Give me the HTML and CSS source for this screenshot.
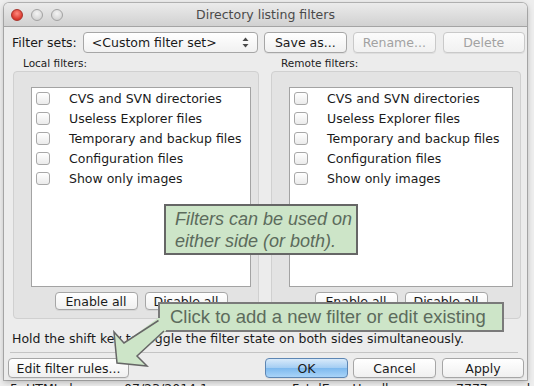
FILE: index.html
```html
<!DOCTYPE html>
<html lang="en">
<head>
    <meta charset="UTF-8">
    <title>Directory listing filters</title>
    <link rel="stylesheet" href="styles.css">
</head>
<body>
    <!-- Dialog window -->
    <div class="window">
        <div class="titlebar">
            <div class="lights">
                <span class="light close"></span>
                <span class="light"></span>
                <span class="light"></span>
            </div>
            <div class="title">Directory listing filters</div>
        </div>

        <div class="content">
            <!-- Filter sets row -->
            <div class="sets-row">
                <span class="sets-label">Filter sets:</span>
                <div class="select">
                    <span>&lt;Custom filter set&gt;</span>
                    <svg class="select-arrows" width="7" height="11" viewBox="0 0 7 11">
                        <path d="M3.5 0.5 L6.5 4 L0.5 4 Z" fill="#4a4a4a"/>
                        <path d="M3.5 10.5 L6.5 7 L0.5 7 Z" fill="#4a4a4a"/>
                    </svg>
                </div>
                <button class="btn">Save as...</button>
                <button class="btn" disabled>Rename...</button>
                <button class="btn" disabled>Delete</button>
            </div>

            <!-- Local / remote panels -->
            <div class="panels">
                <div class="panel panel-local">
                    <div class="panel-label">Local filters:</div>
                    <div class="group">
                        <ul class="list">
                            <li><span class="check"></span>CVS and SVN directories</li>
                            <li><span class="check"></span>Useless Explorer files</li>
                            <li><span class="check"></span>Temporary and backup files</li>
                            <li><span class="check"></span>Configuration files</li>
                            <li><span class="check"></span>Show only images</li>
                        </ul>
                        <div class="group-buttons">
                            <button class="btn small">Enable all</button>
                            <button class="btn small">Disable all</button>
                        </div>
                    </div>
                </div>
                <div class="panel panel-remote">
                    <div class="panel-label">Remote filters:</div>
                    <div class="group">
                        <ul class="list">
                            <li><span class="check"></span>CVS and SVN directories</li>
                            <li><span class="check"></span>Useless Explorer files</li>
                            <li><span class="check"></span>Temporary and backup files</li>
                            <li><span class="check"></span>Configuration files</li>
                            <li><span class="check"></span>Show only images</li>
                        </ul>
                        <div class="group-buttons">
                            <button class="btn small">Enable all</button>
                            <button class="btn small">Disable all</button>
                        </div>
                    </div>
                </div>
            </div>

            <p class="hint">Hold the shift key to toggle the filter state on both sides simultaneously.</p>
            <div class="sep"></div>

            <!-- Bottom buttons -->
            <div class="footer-row">
                <button class="btn edit">Edit filter rules...</button>
                <div class="spacer"></div>
                <button class="btn primary">OK</button>
                <button class="btn">Cancel</button>
                <button class="btn apply">Apply</button>
            </div>
        </div>

        <!-- Annotations -->
        <div class="callout callout-sides">Filters can be used on<br>either side (or both).</div>
        <div class="callout callout-edit">Click to add a new filter or edit existing</div>
        <svg class="arrow" width="534" height="386" viewBox="0 0 534 386">
            <polygon points="158,318 124,343 114,332 117,363 147,366 137,356 166,331 166,318" fill="#cde5c8"/>
            <path d="M158.5 320.5 L124 343 L114 332 L117 363 L147 366 L137 356 L164 331" fill="none" stroke="#666" stroke-width="1.5" stroke-linejoin="miter"/>
        </svg>
    </div>

    <!-- Application behind the dialog -->
    <div class="desk-row">
        <span class="c1">5. HTML docu</span>
        <span class="c2">07/23/2014 1</span>
        <span class="c3">FatalErrorHandl</span>
        <span class="c4">7777 cop-pl</span>
    </div>
</body>
</html>
```

FILE: styles.css
```css
/* Basic reset */
* {
    margin: 0;
    padding: 0;
    box-sizing: border-box;
}

body {
    font-family: "DejaVu Sans", sans-serif;
    font-size: 12.5px;
    color: #1a1a1a;
    background-color: #eeeeee;
    overflow: hidden;
    height: 386px;
}

/* Window */
.window {
    position: relative;
    width: 523px;
    height: 377px;
    margin: 3px 0 0 4px;
    background-color: #ececec;
    border-radius: 5px 5px 0 0;
    box-shadow: 0 0 0 1px rgba(0, 0, 0, 0.22), 0 2px 6px rgba(0, 0, 0, 0.25);
}

.titlebar {
    position: relative;
    height: 24px;
    display: flex;
    align-items: center;
    justify-content: center;
    background: linear-gradient(#ebebeb, #d1d1d1);
    border-bottom: 1px solid #a4a4a4;
    border-radius: 5px 5px 0 0;
}

.lights {
    position: absolute;
    left: 7px;
    top: 6px;
    display: flex;
    gap: 8px;
}

.light {
    width: 12px;
    height: 12px;
    border-radius: 50%;
    background: radial-gradient(circle at 50% 35%, #f4f4f4, #c9c9c9);
    border: 1px solid #a3a3a3;
}

.light.close {
    background: radial-gradient(circle at 50% 35%, #ff8b7f, #d9362b 70%);
    border-color: #a8322a;
}

.title {
    color: #4a4a4a;
    font-size: 12.5px;
}

.content {
    padding: 0 3px 0 8px;
}

/* Buttons */
.btn {
    flex-shrink: 0;
    font-family: "DejaVu Sans", sans-serif;
    font-size: 12.5px;
    color: #1a1a1a;
    height: 21px;
    width: 83px;
    white-space: nowrap;
    background: linear-gradient(#ffffff, #f0f0f0);
    border: 1px solid #a6a6a6;
    border-radius: 4px;
    box-shadow: 0 1px 0 rgba(0, 0, 0, 0.06);
}

.btn:disabled {
    color: #a2a2a2;
    border-color: #c9c9c9;
    background: linear-gradient(#fbfbfb, #f1f1f1);
}

.btn.small {
    height: 18px;
    width: 83px;
}

.btn.primary {
    background: linear-gradient(#d8eafa, #a3cdf3 50%, #7db9ee 51%, #a9d4f8);
    border-color: #5d86b3;
}

/* Filter sets row */
.sets-row {
    display: flex;
    align-items: center;
    margin-top: 5px;
    height: 21px;
}

.sets-label {
    flex-shrink: 0;
    white-space: nowrap;
}

.sets-row .btn {
    margin-left: 6px;
}

.sets-row .btn:last-child {
    margin-left: 7px;
    width: 82px;
}

.select {
    flex-shrink: 0;
    display: flex;
    align-items: center;
    justify-content: space-between;
    width: 175px;
    height: 21px;
    margin-left: 6px;
    padding: 0 8px 0 8px;
    white-space: nowrap;
    background: linear-gradient(#ffffff, #f1f1f1);
    border: 1px solid #a6a6a6;
    border-radius: 4px;
}

/* Panels */
.panels {
    display: flex;
    gap: 12px;
    margin-left: 1px;
    margin-top: 4px;
}

.panel-local {
    width: 246px;
}

.panel-remote {
    width: 250px;
}

.panel-label {
    font-size: 10.5px;
    height: 13px;
    line-height: 13px;
    padding-left: 10px;
    color: #222;
}

.group {
    display: flex;
    flex-direction: column;
    height: 248px;
    margin-top: 1px;
    padding: 15px 7px 8px 17px;
    background-color: #e3e3e3;
    border: 1px solid #d0d0d0;
    border-radius: 4px;
}

.list {
    flex: 1;
    list-style: none;
    background-color: #fff;
    border: 1px solid #a3a3a3;
    padding: 0 0 0 4px;
}

.list li {
    display: flex;
    align-items: center;
    height: 20px;
    white-space: nowrap;
}

.check {
    flex-shrink: 0;
    width: 14px;
    height: 13px;
    margin-right: 19px;
    border: 1px solid #a8a8a8;
    border-radius: 3px;
    background: linear-gradient(#ffffff, #ebebeb);
}

.group-buttons {
    display: flex;
    justify-content: center;
    gap: 7px;
    margin-top: 5px;
}

/* Hint and footer */
.hint {
    margin-top: 13px;
    height: 14px;
    line-height: 14px;
    white-space: nowrap;
}

.sep {
    height: 1px;
    margin: 6px 6px 0 -2px;
    background-color: #c4c4c4;
}

.footer-row {
    display: flex;
    gap: 5px;
    margin: 5px 0 0 -4px;
}

.footer-row .btn {
    height: 20px;
}

.btn.edit {
    width: 121px;
}

.btn.apply {
    width: 82px;
    margin-left: 1px;
}

.spacer {
    flex: 1;
}

/* Annotation callouts */
.callout {
    position: absolute;
    font-family: "Liberation Sans", Arial, sans-serif;
    color: #5c6b5c;
    background-color: #cde5c8;
    border: 2px solid #666;
    white-space: nowrap;
}

.callout-sides {
    left: 160px;
    top: 201px;
    width: 194px;
    height: 51px;
    padding: 2px 0 0 9px;
    font-size: 18px;
    font-style: italic;
    line-height: 22px;
}

.callout-edit {
    left: 154px;
    top: 299px;
    width: 346px;
    height: 30px;
    padding: 1px 0 0 10px;
    font-size: 18.5px;
    line-height: 24px;
    border-color: #7a7a7a;
}

.arrow {
    position: absolute;
    left: -4px;
    top: -3px;
    pointer-events: none;
}

/* Application behind the dialog */
.desk-row {
    position: relative;
    height: 6px;
    font-size: 12.5px;
    line-height: 16px;
    white-space: nowrap;
    overflow: hidden;
}

.desk-row span {
    position: absolute;
    top: 1px;
}

.desk-row .c1 { left: 10px; }
.desk-row .c2 { left: 124px; }
.desk-row .c3 { left: 292px; }
.desk-row .c4 { left: 456px; }
```
